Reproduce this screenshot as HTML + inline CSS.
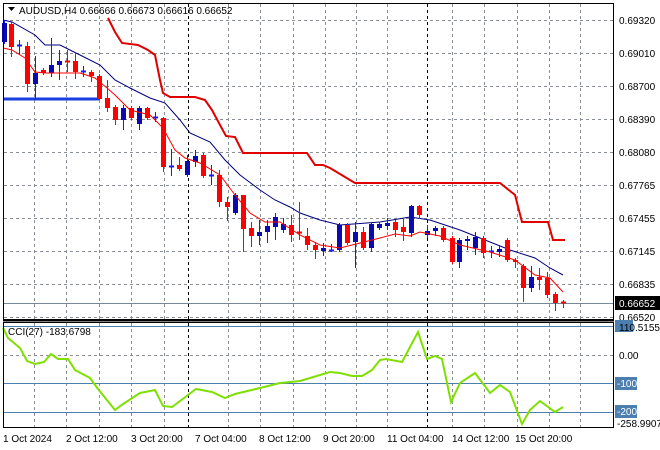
<!DOCTYPE html>
<html><head><meta charset="utf-8"><style>
body{margin:0;background:#fff;}
svg{display:block;font-family:"Liberation Sans",sans-serif;font-size:10px;}
</style></head><body>
<svg width="660" height="450" viewBox="0 0 660 450" xmlns="http://www.w3.org/2000/svg">
<rect width="660" height="450" fill="#fff"/>
<g stroke="#8a8f96" stroke-dasharray="3,3" stroke-width="1">
<path d="M34.5 4V319M66.5 4V319M99.5 4V319M131.5 4V319M164.5 4V319M228.5 4V319M260.5 4V319M293.5 4V319M325.5 4V319M356.5 4V319M387.5 4V319M452.5 4V319M484.5 4V319M517.5 4V319M549.5 4V319M580.5 4V319"/>
<path d="M34.5 323V427M66.5 323V427M99.5 323V427M131.5 323V427M164.5 323V427M228.5 323V427M260.5 323V427M293.5 323V427M325.5 323V427M356.5 323V427M387.5 323V427M452.5 323V427M484.5 323V427M517.5 323V427M549.5 323V427M580.5 323V427"/>
<path d="M4 20.5H613M4 53.5H613M4 86.5H613M4 119.5H613M4 152.5H613M4 185.5H613M4 218.5H613M4 251.5H613M4 284.5H613M4 317.5H613M4 355.5H613"/>
</g>
<g stroke="#000" stroke-dasharray="3,3"><path d="M188.5 4V319M427.5 4V319M188.5 323V427M427.5 323V427"/></g>
<path d="M4 303.5H613" stroke="#778899"/>
<path d="M4 326.5H613M4 383.5H613M4 412.5H613" stroke="#4a7fb0"/>
<path d="M3 99H99" stroke="#1a3fe0" stroke-width="3"/>
<polyline fill="none" stroke="#e00000" stroke-width="2" points="108,18 115,32 122,43 138,45 148,50 155,55 160,80 163,93 170,97 195,97 205,100 212,110 220,125 226,136 235,137 243,153 307,153 315,165 323,165 330,168 355,183 500,183 515,195 522,222 548,222 553,240 565,240"/>
<polyline fill="none" stroke="#000080" stroke-width="1" points="3,20 12,22 35,35 45,45 60,45 80,55 100,65 115,80 130,88 150,98 165,103 180,120 190,133 210,142 225,160 240,175 260,190 275,200 290,207 300,213 320,220 340,225 380,222 410,217 430,220 460,230 480,238 510,250 535,258 550,268 563,275"/>
<!-- red wicks -->
<path stroke="#f00" fill="none" d="M11.5 21V57M27.5 42V92M43.5 68V75M67.5 50V72M75.5 52V79M91.5 70V82M99.5 74V100M107.5 80V112M115.5 105V125M131.5 106V120M147.5 107V120M163.5 117V172M179.5 157V171M203.5 153V178M219.5 170V207M227.5 197V221M243.5 195V252M251.5 222V247M291.5 215V242M299.5 202V240M307.5 228V250M315.5 242V259M347.5 223V245M363.5 227V250M395.5 220V237M403.5 218V241M419.5 205V219M443.5 226V242M452.5 236V264M483.5 236V258M507.5 238V262M515.5 258V268M523.5 264V302M539.5 268V290M547.5 272V298M555.5 292V311M563.5 300V308"/>
<path stroke="#f00" stroke-width="2" d="M65 61.5H70M297 232.5H302M561 302.5H566"/>
<g fill="#f00">
<rect x="9" y="24" width="5" height="23"/><rect x="25" y="46" width="5" height="38"/><rect x="41" y="70" width="5" height="3"/><rect x="73" y="61" width="5" height="11"/><rect x="89" y="72" width="5" height="4"/><rect x="97" y="76" width="5" height="23"/><rect x="105" y="98" width="5" height="10"/><rect x="113" y="107" width="5" height="13"/><rect x="129" y="108" width="5" height="10"/><rect x="145" y="108" width="5" height="10"/><rect x="161" y="118" width="5" height="49"/><rect x="177" y="165" width="5" height="4"/><rect x="201" y="155" width="5" height="21"/><rect x="217" y="175" width="5" height="27"/><rect x="225" y="202" width="5" height="5"/><rect x="241" y="195" width="5" height="34"/><rect x="249" y="228" width="5" height="8"/><rect x="289" y="225" width="5" height="10"/><rect x="305" y="236" width="5" height="9"/><rect x="313" y="245" width="5" height="5"/><rect x="345" y="225" width="5" height="18"/><rect x="361" y="232" width="5" height="16"/><rect x="393" y="222" width="5" height="8"/><rect x="401" y="227" width="5" height="5"/><rect x="417" y="206" width="5" height="9"/><rect x="441" y="228" width="5" height="12"/><rect x="450" y="238" width="5" height="24"/><rect x="481" y="238" width="5" height="15"/><rect x="505" y="240" width="5" height="20"/><rect x="513" y="260" width="5" height="2"/><rect x="521" y="266" width="5" height="22"/><rect x="537" y="277" width="5" height="3"/><rect x="545" y="278" width="5" height="17"/><rect x="553" y="294" width="5" height="9"/>
</g>
<!-- blue wicks -->
<path stroke="#1a1aff" fill="none" d="M4.5 20V44M19.5 40V55M35.5 56V99M51.5 38V77M59.5 50V80M83.5 66V77M123.5 105V130M139.5 106V130M155.5 112V122M171.5 149V176M187.5 155V177M195.5 150V167M211.5 165V185M235.5 193V215M259.5 220V245M267.5 220V243M275.5 213V240M283.5 218V233M323.5 243V256M331.5 244V252M339.5 223V252M355.5 222V268M371.5 222V252M379.5 222V230M387.5 218V230M411.5 205V237M427.5 225V238M435.5 226V236M459.5 238V268M467.5 236V250M475.5 232V255M491.5 246V258M499.5 245V257M531.5 266V292"/>
<path stroke="#1a1aff" stroke-width="2" d="M17 45.5H22M81 71.5H86M153 117.5H158M169 166.5H174M209 175.5H214M329 250.5H334M489 251.5H494"/>
<g fill="#0a0ab0">
<rect x="2" y="23" width="5" height="19"/><rect x="33" y="73" width="5" height="11"/><rect x="49" y="65" width="5" height="8"/><rect x="57" y="61" width="5" height="4"/><rect x="121" y="108" width="5" height="12"/><rect x="137" y="108" width="5" height="16"/><rect x="185" y="161" width="5" height="14"/><rect x="193" y="156" width="5" height="6"/><rect x="233" y="195" width="5" height="18"/><rect x="257" y="232" width="5" height="4"/><rect x="265" y="226" width="5" height="6"/><rect x="273" y="217" width="5" height="10"/><rect x="281" y="224" width="5" height="6"/><rect x="321" y="248" width="5" height="3"/><rect x="337" y="225" width="5" height="25"/><rect x="353" y="232" width="5" height="10"/><rect x="369" y="224" width="5" height="24"/><rect x="377" y="224" width="5" height="4"/><rect x="385" y="223" width="5" height="3"/><rect x="409" y="206" width="5" height="27"/><rect x="425" y="231" width="5" height="4"/><rect x="433" y="228" width="5" height="3"/><rect x="457" y="240" width="5" height="22"/><rect x="465" y="239" width="5" height="2"/><rect x="473" y="237" width="5" height="11"/><rect x="497" y="249" width="5" height="3"/><rect x="529" y="277" width="5" height="11"/>
</g>
<polyline fill="none" stroke="#f00" stroke-width="1" points="3,48 12,50 25,58 35,72 45,73 80,73 95,78 107,88 115,95 130,110 150,115 163,128 175,150 185,158 200,163 220,175 235,195 250,213 265,222 280,222 300,235 320,245 340,248 360,243 380,238 395,234 410,236 420,232 440,236 460,245 490,252 515,260 535,275 550,278 563,292"/>
<polyline fill="none" stroke="#7fe000" stroke-width="2" points="3,328 8,338 14,343 20,348 27,361 35,364 44,362 51,354 58,359 68,359 75,370 90,378 98,389 115,410 123,404 140,393 155,390 163,406 172,407 188,395 196,389 212,392 225,398 235,394 260,388 280,383 300,381 330,372 340,373 352,376 362,376 372,370 380,360 386,359 402,362 418,332 427,359 435,356 442,359 451,402 460,383 475,373 490,393 500,385 510,392 522,424 530,410 540,401 555,412 563,407"/>
<rect x="3.5" y="3.5" width="610" height="316" fill="none" stroke="#000"/>
<rect x="3.5" y="322.5" width="610" height="105" fill="none" stroke="#000"/>
<path d="M3 320.5H614" stroke="#000" stroke-width="2"/>
<path d="M8 7L15 7L11.5 11Z" fill="#000"/>
<text x="19" y="14" fill="#000">AUDUSD,H4  0.66666 0.66673 0.66616 0.66652</text>
<text x="8" y="335" fill="#000">CCI(27) -183.6798</text>
<g fill="#000">
<text x="619" y="24">0.69320</text><text x="619" y="57">0.69010</text><text x="619" y="90">0.68700</text><text x="619" y="123">0.68390</text><text x="619" y="156">0.68080</text><text x="619" y="189">0.67765</text><text x="619" y="222">0.67455</text><text x="619" y="255">0.67145</text><text x="619" y="288">0.66835</text><text x="619" y="321">0.66520</text>
</g>
<rect x="615" y="296" width="45" height="14" fill="#000"/><text x="619" y="307" fill="#fff">0.66652</text>
<rect x="615" y="320" width="18" height="12" fill="#4a7fb0"/>
<text x="619" y="331" fill="#000">110.5155</text>
<text x="619" y="359" fill="#000">0.00</text>
<rect x="615" y="377" width="22" height="13" fill="#4a7fb0"/><text x="617" y="387" fill="#fff">-100</text>
<rect x="615" y="405" width="22" height="13" fill="#4a7fb0"/><text x="617" y="415" fill="#fff">-200</text>
<text x="617" y="427" fill="#000">-258.9907</text>
<g fill="#000">
<text x="3" y="442">1 Oct 2024</text><text x="66" y="442">2 Oct 12:00</text><text x="131" y="442">3 Oct 20:00</text><text x="195" y="442">7 Oct 04:00</text><text x="259" y="442">8 Oct 12:00</text><text x="323" y="442">9 Oct 20:00</text><text x="387" y="442">11 Oct 04:00</text><text x="452" y="442">14 Oct 12:00</text><text x="515" y="442">15 Oct 20:00</text>
</g>
</svg>
</body></html>
